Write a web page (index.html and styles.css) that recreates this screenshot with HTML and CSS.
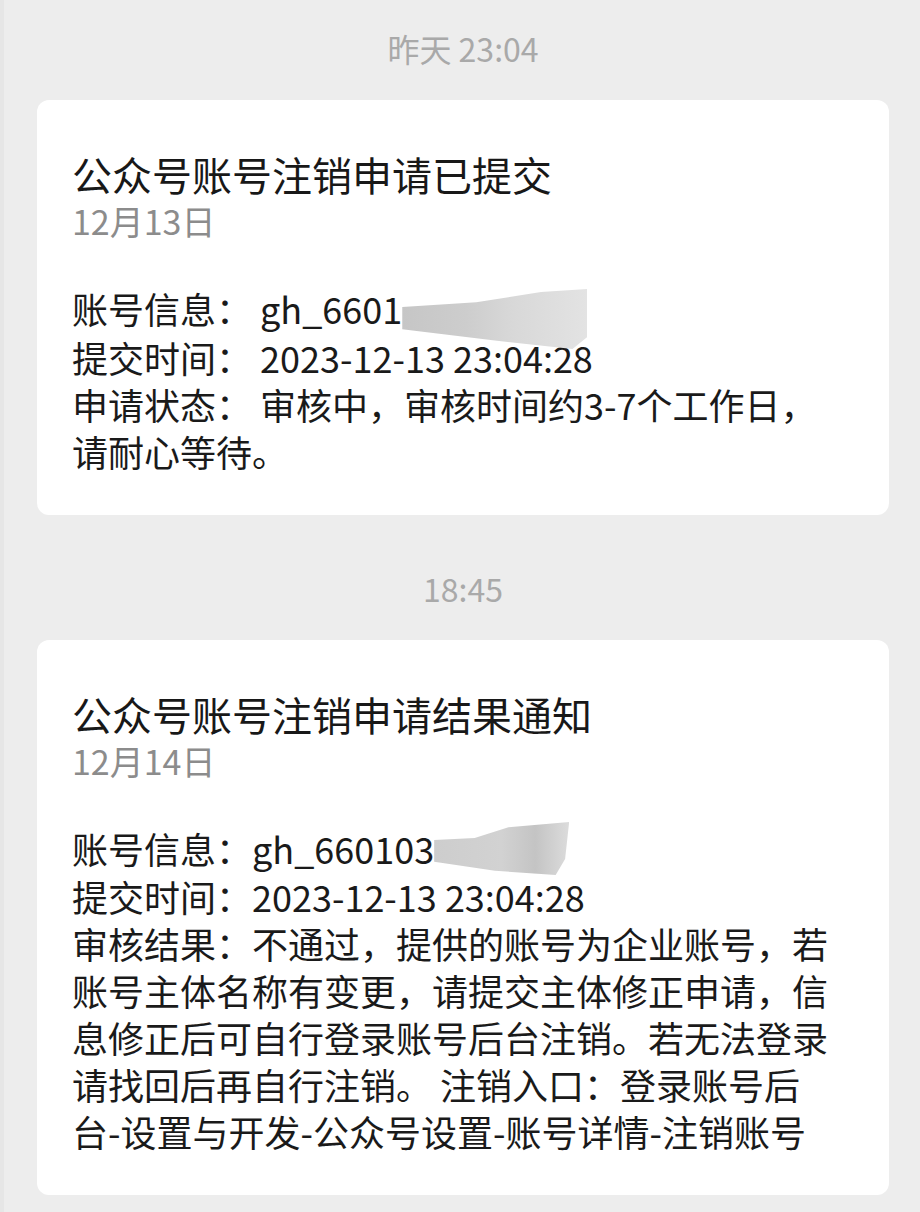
FILE: index.html
```html
<!DOCTYPE html>
<html>
    <head>
        <title>公众号消息</title>
        <meta charset="UTF-8">
        <link rel="stylesheet" href="styles.css">
    </head>
    <body>
        <div class="conversa">
            <div class="mensagem">
                <div class="hora">昨天 23:04</div>
                <div class="cartao">
                    <h2 class="titulo">公众号账号注销申请已提交</h2>
                    <div class="data">12月13日</div>
                    <div class="corpo">
                        <p>账号信息：&nbsp;gh_6601<span class="borrao borrao-um"></span></p>
                        <p>提交时间：&nbsp;2023-12-13 23:04:28</p>
                        <p>申请状态：&nbsp;审核中，审核时间约3-7个工作日，请耐心等待。</p>
                    </div>
                </div>
            </div>
            <div class="mensagem">
                <div class="hora">18:45</div>
                <div class="cartao">
                    <h2 class="titulo">公众号账号注销申请结果通知</h2>
                    <div class="data">12月14日</div>
                    <div class="corpo">
                        <p>账号信息：gh_660103<span class="borrao borrao-dois"></span></p>
                        <p>提交时间：2023-12-13 23:04:28</p>
                        <p>审核结果：不通过，提供的账号为企业账号，若账号主体名称有变更，请提交主体修正申请，信息修正后可自行登录账号后台注销。若无法登录请找回后再自行注销。 注销入口：登录账号后台-设置与开发-公众号设置-账号详情-注销账号</p>
                    </div>
                </div>
            </div>
        </div>
    </body>
</html>
```

FILE: styles.css
```css
* {
    margin: 0;
    padding: 0;
    box-sizing: border-box;
    font-family: "Noto Sans CJK SC", sans-serif;
}
body {
    background-color: #ededed;
    width: 920px;
    min-height: 1212px;
    border-left: 4px solid #e6e6e6;
}
.conversa {
    display: flex;
    flex-direction: column;
    padding: 0 31px 0 33px;
}
.mensagem + .mensagem {
    margin-top: 25px;
}
.hora {
    padding: 28px 0 32px;
    line-height: 40px;
    font-size: 32px;
    color: #a9a9a9;
    text-align: center;
}
.cartao {
    background-color: #ffffff;
    border-radius: 12px;
    padding: 49px 58px 40px 35px;
}
.titulo {
    font-size: 40px;
    font-weight: normal;
    line-height: 50px;
    color: #181818;
}
.data {
    font-size: 34px;
    line-height: 44px;
    color: #8c8c8c;
}
.corpo {
    margin-top: 42px;
}
.corpo p {
    font-size: 36px;
    line-height: 47px;
    color: #1a1a1a;
}
/* mancha que esconde o resto do id */
.borrao {
    display: inline-block;
}
.borrao-um {
    width: 185px;
    height: 60px;
    vertical-align: -10px;
    margin-bottom: -15px;
    background: linear-gradient(90deg, #c6c6c6 0%, #cdcdcd 35%, #d8d8d8 60%, #e3e3e3 100%);
    clip-path: polygon(0 30%, 40% 22%, 75% 5%, 100% 0, 100% 80%, 92% 100%, 50% 86%, 0 67%);
}
.borrao-dois {
    width: 135px;
    height: 53px;
    vertical-align: -9px;
    margin-top: -5px;
    margin-bottom: -2px;
    background: linear-gradient(90deg, #cdcdcd 0%, #d2d2d2 50%, #c4c4c4 75%, #dcdcdc 100%);
    clip-path: polygon(0 34%, 30% 30%, 55% 10%, 100% 0, 97% 70%, 90% 100%, 45% 92%, 0 75%);
}
```
